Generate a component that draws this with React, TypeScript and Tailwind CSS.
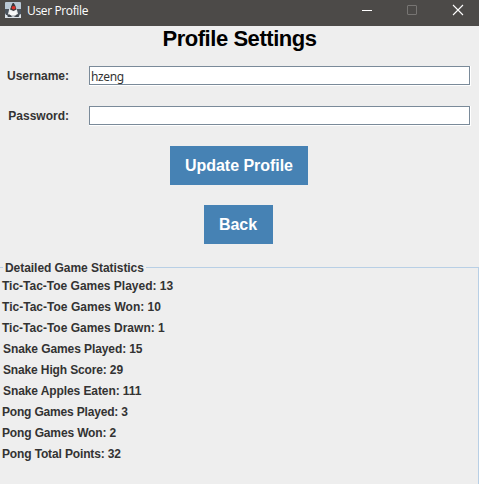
const STATS = [
  { label: 'Tic-Tac-Toe Games Played', value: 13, tracking: 'tracking-[-0.01px]' },
  { label: 'Tic-Tac-Toe Games Won', value: 10, tracking: 'tracking-[0.02px]' },
  { label: 'Tic-Tac-Toe Games Drawn', value: 1, tracking: 'tracking-[0px]' },
  { label: 'Snake Games Played', value: 15, tracking: 'pl-px tracking-[-0.09px]' },
  { label: 'Snake High Score', value: 29, tracking: 'pl-px tracking-[-0.14px]' },
  { label: 'Snake Apples Eaten', value: 111, tracking: 'pl-px tracking-[-0.09px]' },
  { label: 'Pong Games Played', value: 3, tracking: 'tracking-[-0.18px]' },
  { label: 'Pong Games Won', value: 2, tracking: 'tracking-[-0.14px]' },
  { label: 'Pong Total Points', value: 32, tracking: 'tracking-[-0.14px]' },
];

function DukeIcon() {
  return (
    <svg width="16" height="16" viewBox="0 0 16 16">
      <rect width="16" height="16" rx="1" fill="#b9c8d5" />
      <rect y="12" width="16" height="4" fill="#dce2e8" />
      <path d="M0 7h4l2 3-2 3H1L0 11z M16 7v5l-2 1h-2l-2-3 2-3z" fill="#4b535c" />
      <path d="M8 1l2 3 2 4 1 4-2 2H5l-2-2 1-4 2-4z" fill="#eceeef" />
      <path d="M7.6 1h1.2l1.7 3 1 3.5-3 1.5-3.5-1.5L6.2 4z" fill="#39393e" />
      <ellipse cx="8.6" cy="5.7" rx="2" ry="1.7" fill="#e02f29" />
      <path d="M2 13.5l3-1.5 1.5 1.5h4L12 12l2.5 1.5-1 1.5h-3L8 14l-2 1H3z" fill="#41474e" />
      <path d="M5 9l3 1 3-1 .5 3.5-2 1h-3l-2-1z" fill="#f8f8f8" />
    </svg>
  );
}

function TitleBar() {
  return (
    <header className="flex h-[26px] items-start bg-[#4c4a48] pl-[5px] text-white">
      <div className="pt-[2px]"><DukeIcon /></div>
      <span className="ml-[6px] mt-[3px] font-['Open_Sans',sans-serif] text-[12px] font-normal leading-4 tracking-[-0.36px]">User Profile</span>
      <svg className="ml-auto" width="117" height="21" viewBox="0 0 117 21" fill="none">
        <path d="M0 10.5h10" stroke="#fff" />
        <rect x="45.5" y="5.5" width="9" height="9" rx="0.5" stroke="#777573" />
        <path d="M91 5l10 10M101 5L91 15" stroke="#fff" strokeWidth="1.1" />
      </svg>
    </header>
  );
}

function Field({ label, value }: { label: string; value: string }) {
  return (
    <div className="flex h-5 pr-2">
      <label className="mr-5 w-[69px] whitespace-nowrap text-right leading-[21px]">{label}</label>
      <div className="flex-1 border-b border-r border-white">
        <div className="h-[19px] border border-[#7a8a99] bg-white pl-px font-['Noto_Sans',sans-serif] text-[12px] font-normal leading-[19px] tracking-[-0.35px]">
          {value}
        </div>
      </div>
    </div>
  );
}

function Button({ children, size }: { children: string; size: string }) {
  return (
    <button className={`h-[39px] whitespace-nowrap bg-[#4682b4] pl-[15px] text-left text-[16px] font-bold leading-[39px] tracking-[-0.04px] text-white ${size}`}>{children}</button>
  );
}

export default function App() {
  return (
    <div className="flex h-[484px] w-[479px] flex-col overflow-hidden bg-[#eeeeee] font-['Liberation_Sans',Arial,sans-serif] text-[12px] font-bold text-[#333333]">
      <TitleBar />
      <h1 className="h-10 text-center text-[22px] leading-[26px] tracking-[-0.45px] text-black">Profile Settings</h1>
      <div className="flex flex-col gap-5">
        <Field label="Username:" value="hzeng" />
        <Field label="Password:" value="" />
      </div>
      <div className="mt-5 flex flex-col items-center gap-5 pr-px">
        <Button size="w-[138px]">Update Profile</Button>
        <Button size="mr-px w-[69px]">Back</Button>
      </div>
      <section className="mt-4 flex flex-1 flex-col">
        <div className="flex h-4 items-start">
          <span className="mt-[7px] h-px w-[3px] bg-[#b8cfe5]" />
          <h2 className="w-[143px] whitespace-nowrap pl-[2px] leading-4 tracking-[-0.05px]">Detailed Game Statistics</h2>
          <span className="mt-[7px] h-[9px] flex-1 border-r border-t border-[#b8cfe5]" />
        </div>
        <ul className="flex-1 border-r border-[#b8cfe5] pl-[2px]">
          {STATS.map((stat) => (
            <li key={stat.label} className={`h-[21px] leading-[21px] ${stat.tracking}`}>
              {stat.label}: {stat.value}
            </li>
          ))}
        </ul>
      </section>
    </div>
  );
}
